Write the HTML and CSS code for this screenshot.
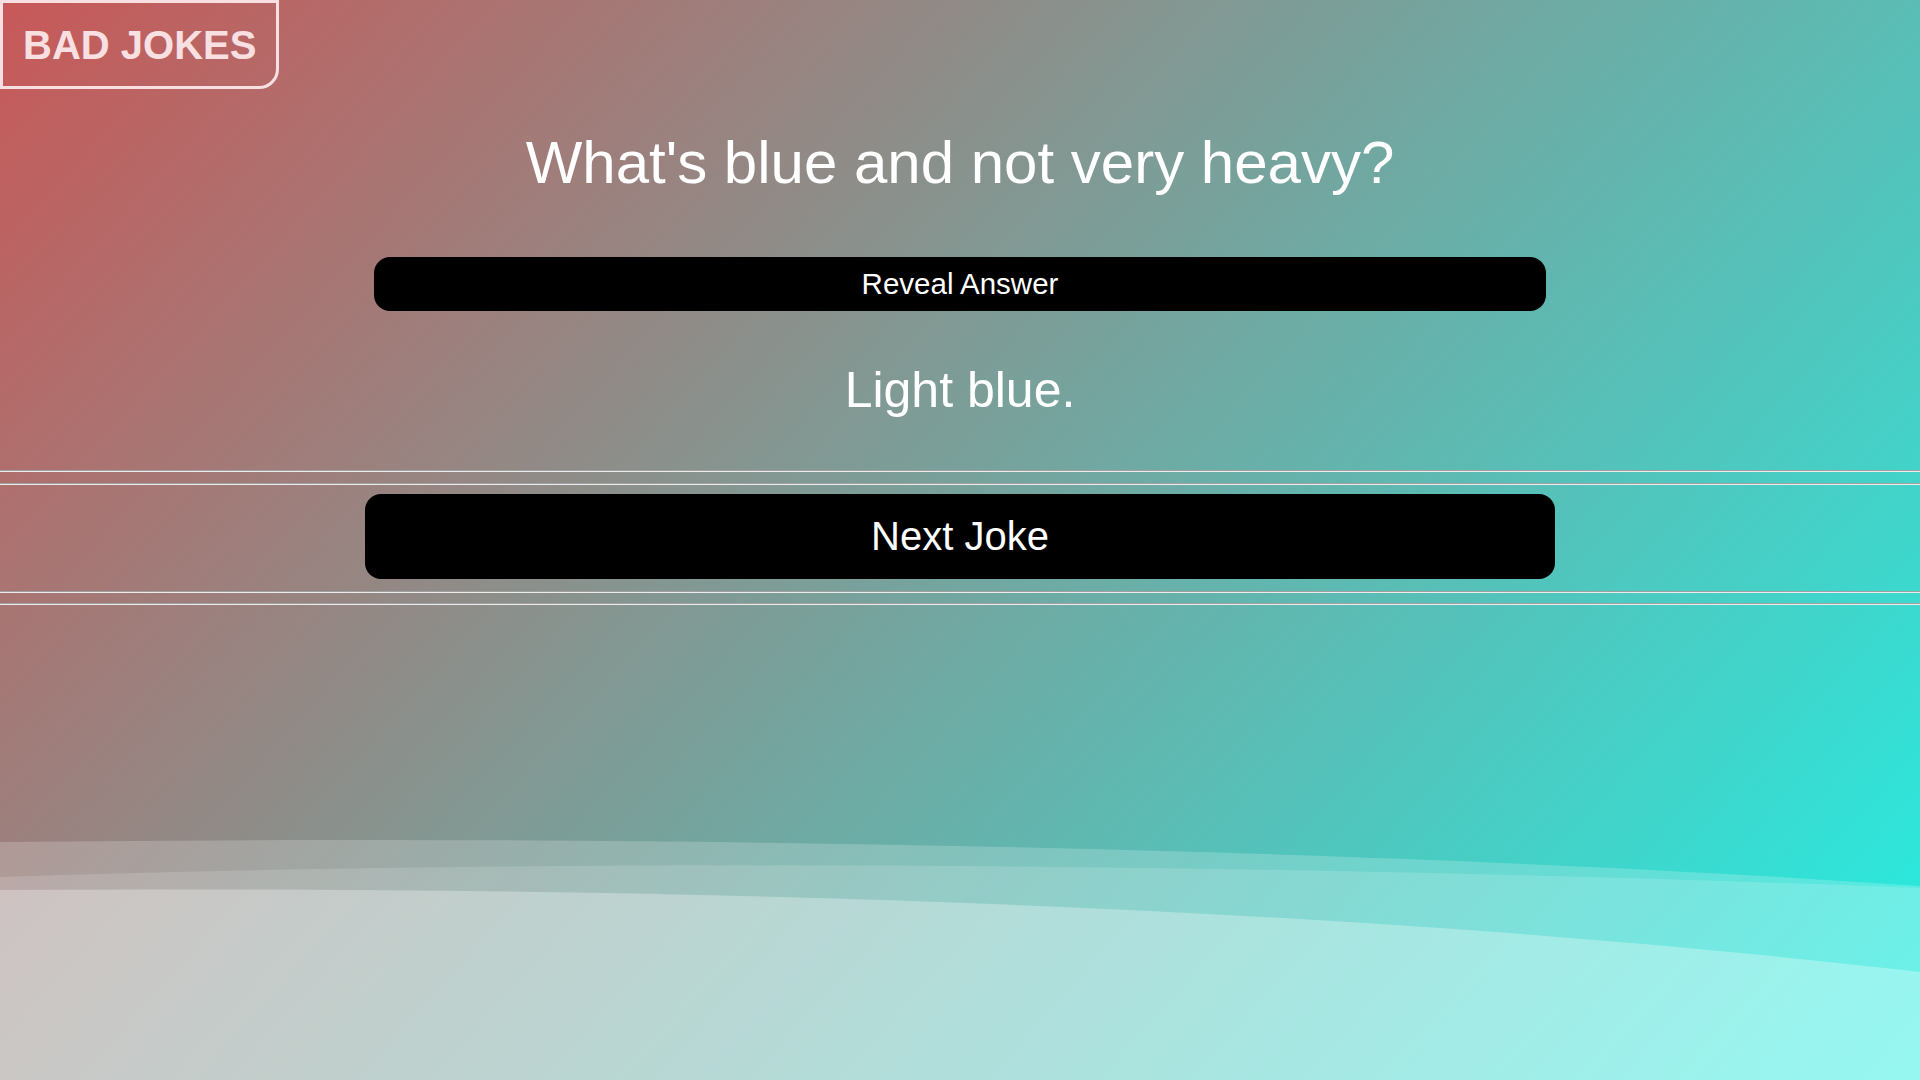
FILE: index.html
```html
<!DOCTYPE html>
<html lang="en">
<head>
<meta charset="utf-8">
<title>Bad Jokes</title>
<link rel="stylesheet" href="styles.css">
</head>
<body>
<svg class="waves" viewBox="0 0 1920 240" preserveAspectRatio="none" aria-hidden="true">
  <path class="wave w1" d="M0,2 C700,-6 1400,10 1920,46 L1920,240 L0,240 Z"/>
  <path class="wave w2" d="M0,37 C500,20 1200,20 1920,48 L1920,240 L0,240 Z"/>
  <path class="wave w3" d="M0,50 C600,46 1300,60 1920,132 L1920,240 L0,240 Z"/>
</svg>
<header class="top">
  <div class="logo">BAD JOKES</div>
</header>
<main class="joke">
  <h1 class="question">What's blue and not very heavy?</h1>
  <button class="reveal">Reveal Answer</button>
  <p class="answer">Light blue.</p>
  <hr class="rule rule-a">
  <hr class="rule rule-b">
  <button class="next">Next Joke</button>
  <hr class="rule rule-c">
  <hr class="rule rule-d">
</main>
</body>
</html>
```
FILE: styles.css
```css
* { box-sizing: border-box; }
html, body { height: 100%; }
body {
  margin: 0;
  min-height: 100vh;
  position: relative;
  overflow: hidden;
  font-family: "Liberation Sans", Arial, sans-serif;
  color: #fff;
  background: linear-gradient(132deg, #c85858 0%, #22f0e4 100%);
}
.waves {
  position: absolute;
  left: 0;
  bottom: 0;
  width: 100%;
  height: 240px;
  z-index: 0;
}
.wave { fill: #fff; }
.w1 { opacity: 0.2; }
.w2 { opacity: 0.15; }
.w3 { opacity: 0.3; }
.top {
  position: relative;
  z-index: 1;
  display: flex;
}
.logo {
  font-weight: 700;
  font-size: 40px;
  line-height: 46px;
  color: #f8e0e2;
  border: 3px solid #f8e0e2;
  border-bottom-right-radius: 20px;
  padding: 19px 20px 18px 20px;
}
.joke {
  position: relative;
  z-index: 1;
  display: flex;
  flex-direction: column;
  align-items: center;
}
.question {
  margin: 39px 0 0 0;
  font-size: 60px;
  line-height: 69px;
  font-weight: 400;
}
.reveal {
  margin-top: 60px;
  width: 61%;
  font-family: inherit;
  font-size: 29.5px;
  line-height: 34px;
  padding: 10px 0;
  color: #fff;
  background: #000;
  border: none;
  border-radius: 16px;
}
.answer {
  margin: 50px 0 0 0;
  font-size: 50px;
  line-height: 58px;
}
.rule {
  width: 100%;
  height: 2px;
  margin: 0;
  border: none;
  border-top: 1px solid #a0a0a0;
  border-bottom: 1px solid #ececec;
}
.rule-a { margin-top: 51px; }
.rule-b { margin-top: 11px; }
.next {
  margin-top: 9px;
  width: 62%;
  font-family: inherit;
  font-size: 40px;
  line-height: 46px;
  padding: 19px 0 20px;
  color: #fff;
  background: #000;
  border: none;
  border-radius: 16px;
}
.rule-c { margin-top: 12px; }
.rule-d { margin-top: 10px; }
```
